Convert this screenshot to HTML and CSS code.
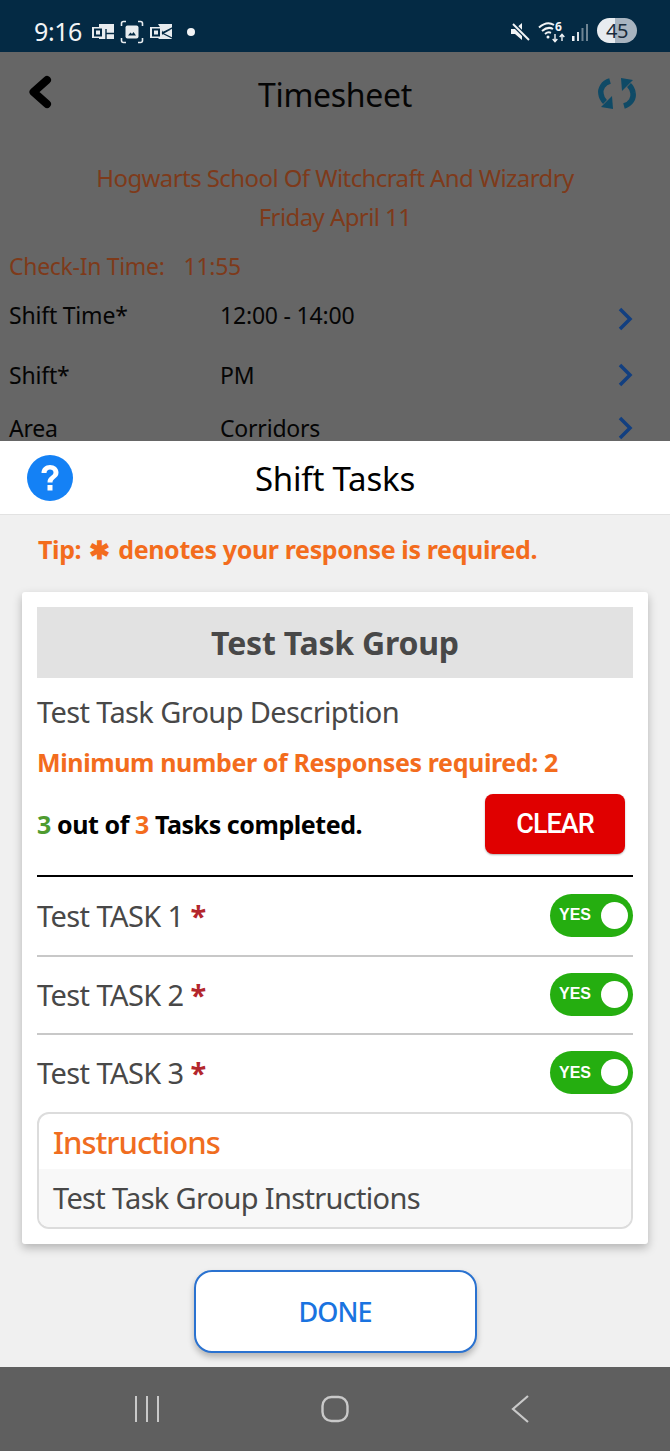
FILE: index.html
```html
<!DOCTYPE html>
<html lang="en">
<head>
    <meta charset="UTF-8">
    <meta name="viewport" content="width=device-width, initial-scale=1.0">
    <title>Timesheet</title>
    <link rel="stylesheet" href="styles.css">
</head>
<body>
    <div class="status-bar">
        <span class="clock">9:16</span>
        <svg class="note-icon" width="24" height="18" viewBox="0 0 24 18">
            <path d="M8 1h15v15H8z" fill="#e8ecef"/>
            <rect x="1" y="4" width="12" height="11" fill="#e8ecef"/>
            <rect x="4" y="6.500" width="6" height="6" fill="none" stroke="#042a44" stroke-width="2"/>
            <path d="M15 6v10M15 10.500h8" stroke="#042a44" stroke-width="1.400"/>
        </svg>
        <svg class="note-icon" width="24" height="24" viewBox="0 0 24 24" fill="none">
            <path d="M6 1.500H3.500Q1.500 1.500 1.500 3.500V6M18 1.500h2.500Q22.500 1.500 22.500 3.500V6M1.500 18v2.500Q1.500 22.500 3.500 22.500H6M22.500 18v2.500Q22.500 22.500 20.500 22.500H18" stroke="#e8ecef" stroke-width="1.600"/>
            <rect x="5.500" y="5.500" width="13" height="13" rx="2" fill="#e8ecef"/>
            <path d="M8 15.500l2.500-3 1.500 1.500 1.500-2 2.500 3.500z" fill="#042a44"/>
        </svg>
        <svg class="note-icon" width="24" height="18" viewBox="0 0 24 18">
            <rect x="1" y="4" width="12" height="11" fill="#e8ecef"/>
            <path d="M9 1h14v5l-9 3zM14 11l9-5v10H9z" fill="#e8ecef"/>
            <rect x="4" y="6.500" width="6" height="6" fill="none" stroke="#042a44" stroke-width="2"/>
            <path d="M13 10l11-5.500M13 10l11 5.500" stroke="#042a44" stroke-width="1.300"/>
        </svg>
        <span class="status-dot"></span>
        <span class="status-right">
            <svg class="mute" width="20" height="20" viewBox="0 0 20 20">
                <path d="M1 7h4l7-6v17l-7-6H1z" fill="#f2f4f6"/>
                <path d="M2 1l17 17" stroke="#042a44" stroke-width="4.500"/>
                <path d="M3 2l16 16" stroke="#f2f4f6" stroke-width="2"/>
            </svg>
            <svg class="wifi" width="27" height="26" viewBox="0 -4 27 26" fill="none" stroke="#f2f4f6">
                <path d="M1 6.500q8-7 15-2.500M4 10q6-5 11-2M7 13q3-2.500 6-1.200" stroke-width="2"/>
                <circle cx="10" cy="16" r="1.500" fill="#f2f4f6" stroke="none"/>
                <path d="M17 13v7M14.700 18l2.300 2.700 2.300-2.700M24 20v-6M21.700 16l2.300-2.700 2.300 2.700" stroke-width="1.400"/>
                <text x="17" y="10" class="wifi-six">6</text>
            </svg>
            <svg class="signal" width="18" height="20" viewBox="0 0 18 20">
                <rect x="1" y="14" width="2.500" height="5" fill="#f2f4f6"/>
                <rect x="6" y="10" width="2" height="9" fill="#dde2e6"/>
                <rect x="10.500" y="6" width="2" height="13" fill="#6f8493"/>
                <rect x="15" y="2" width="2" height="17" fill="#6f8493"/>
            </svg>
            <span class="battery">45</span>
        </span>
    </div>

    <div class="dimmed">
        <header class="top-bar">
            <svg class="back" width="26" height="34" viewBox="0 0 26 34" fill="none">
                <path d="M20 5L6.500 17 20 29" stroke="#000" stroke-width="8" stroke-linecap="round" stroke-linejoin="round"/>
            </svg>
            <h1>Timesheet</h1>
            <svg class="refresh" width="46" height="40" viewBox="7 5 46 40">
                <g>
                    <path d="M20 11C13 13 10 19 11 24c.5 4 2 6 4 8" fill="none" stroke="#0f4a66" stroke-width="5.500"/>
                    <path d="M11 37l12 2-1-13z" fill="#0f4a66"/>
                </g>
                <g transform="rotate(180 27 23.500)">
                    <path d="M20 11C13 13 10 19 11 24c.5 4 2 6 4 8" fill="none" stroke="#0f4a66" stroke-width="5.500"/>
                    <path d="M11 37l12 2-1-13z" fill="#0f4a66"/>
                </g>
            </svg>
        </header>
        <div class="school first">Hogwarts School Of Witchcraft And Wizardry</div>
        <div class="school">Friday April 11</div>
        <div class="check-in"><span>Check-In Time:</span><span>11:55</span></div>
        <div class="field-row row-time">
            <span class="field-name">Shift Time*</span><span class="field-value">12:00 - 14:00</span>
            <svg class="chev" width="16" height="24" viewBox="0 0 16 24" fill="none"><path d="M3 2l10 10L3 22" stroke="#123f80" stroke-width="3.500"/></svg>
        </div>
        <div class="field-row row-shift">
            <span class="field-name">Shift*</span><span class="field-value">PM</span>
            <svg class="chev" width="16" height="24" viewBox="0 0 16 24" fill="none"><path d="M3 2l10 10L3 22" stroke="#123f80" stroke-width="3.500"/></svg>
        </div>
        <div class="field-row row-area">
            <span class="field-name">Area</span><span class="field-value">Corridors</span>
            <svg class="chev" width="16" height="24" viewBox="0 0 16 24" fill="none"><path d="M3 2l10 10L3 22" stroke="#123f80" stroke-width="3.500"/></svg>
        </div>
    </div>

    <div class="sheet-head">
        <svg class="help" width="46" height="46" viewBox="0 0 46 46">
            <circle cx="23" cy="23" r="23" fill="#1481f5"/>
            <path d="M14.500 18c0-5 3.800-8 8.500-8s8.500 3 8.500 7.500c0 6-6 5.500-6 10h-5c0-6.500 6-6.500 6-10 0-1.800-1.500-3-3.500-3s-3.500 1.500-3.500 3.500z" fill="#fff"/>
            <rect x="20.500" y="30" width="5" height="5.500" fill="#fff"/>
        </svg>
        <h2>Shift Tasks</h2>
    </div>

    <main class="sheet-body">
        <p class="tip">Tip: <span class="tip-star">✱</span> denotes your response is required.</p>
        <section class="card">
            <h3 class="group-title">Test Task Group</h3>
            <p class="group-desc">Test Task Group Description</p>
            <p class="min-resp">Minimum number of Responses required: 2</p>
            <div class="progress-row">
                <p class="progress"><span class="green">3</span> out of <span class="orange">3</span> Tasks completed.</p>
                <button class="clear">CLEAR</button>
            </div>
            <div class="task first">
                <span class="task-name">Test TASK 1 <span class="req">*</span></span>
                <span class="toggle"><span>YES</span><i></i></span>
            </div>
            <div class="task">
                <span class="task-name">Test TASK 2 <span class="req">*</span></span>
                <span class="toggle"><span>YES</span><i></i></span>
            </div>
            <div class="task last">
                <span class="task-name">Test TASK 3 <span class="req">*</span></span>
                <span class="toggle"><span>YES</span><i></i></span>
            </div>
            <div class="instructions">
                <div class="instr-head">Instructions</div>
                <div class="instr-body">Test Task Group Instructions</div>
            </div>
        </section>
        <button class="done">DONE</button>
    </main>

    <nav class="nav-bar">
        <svg width="30" height="30" viewBox="0 0 30 30" fill="#c9c9c9">
            <rect x="3" y="2" width="2" height="26"/>
            <rect x="14" y="2" width="2" height="26"/>
            <rect x="25" y="2" width="2" height="26"/>
        </svg>
        <svg width="30" height="30" viewBox="0 0 30 30" fill="none">
            <rect x="2.500" y="3" width="25" height="24" rx="9" stroke="#c9c9c9" stroke-width="2.400"/>
        </svg>
        <svg width="30" height="30" viewBox="0 0 30 30" fill="none">
            <path d="M21 2L6 15l15 13" stroke="#c9c9c9" stroke-width="2.200"/>
        </svg>
    </nav>
</body>
</html>
```

FILE: styles.css
```css
* {
    box-sizing: border-box;
}
html, body {
    margin: 0;
    padding: 0;
}
body {
    width: 670px;
    height: 1451px;
    overflow: hidden;
    font-family: "Noto Sans", "Open Sans", sans-serif;
    background-color: #666;
}
h1, h2, h3, p {
    margin: 0;
    font-weight: normal;
}

/* status bar */
.status-bar {
    height: 52px;
    background-color: #042a44;
    display: flex;
    align-items: center;
    padding: 11px 33px 0 34px;
    color: #f2f4f6;
}
.clock {
    font-size: 25px;
    letter-spacing: -0.4px;
    margin-right: 9px;
    margin-bottom: 2px;
}
.note-icon {
    margin-right: 5px;
}
.status-dot {
    width: 8px;
    height: 8px;
    border-radius: 50%;
    background-color: #f2f4f6;
    margin-left: 9px;
}
.status-right {
    margin-left: auto;
    display: flex;
    align-items: center;
}
.wifi {
    margin-left: 8px;
    margin-top: -4px;
}
.signal {
    margin-left: 6px;
}
.wifi-six {
    font-size: 12px;
    font-weight: bold;
    fill: #f2f4f6;
    stroke: none;
    font-family: "Noto Sans", sans-serif;
}
.battery {
    width: 40px;
    height: 25px;
    margin-left: 8px;
    margin-top: -2px;
    border-radius: 13px;
    background: linear-gradient(90deg, #e8ecf0 45%, #a8b4c0 45%);
    color: #1a2c3c;
    font-size: 20px;
    letter-spacing: -0.5px;
    line-height: 25px;
    text-align: center;
}

/* dimmed timesheet behind the sheet */
.dimmed {
    height: 389px;
    background-color: #666;
    padding-left: 9px;
    color: #000;
}
.top-bar {
    height: 85px;
    margin-left: -9px;
    display: grid;
    grid-template-columns: 1fr auto 1fr;
    align-items: center;
    padding: 0 27px;
}
.back {
    margin-bottom: 6px;
}
.refresh {
    justify-self: end;
}
.top-bar h1 {
    font-size: 32px;
    letter-spacing: -0.33px;
    color: #050505;
}
.school {
    color: #7e3a1a;
    font-size: 24px;
    letter-spacing: -0.58px;
    line-height: 39px;
    text-align: center;
    margin-left: -9px;
}
.school.first {
    margin-top: 21px;
}
.check-in {
    color: #7e3a1a;
    font-size: 23px;
    letter-spacing: -0.3px;
    line-height: 32px;
    margin-top: 14px;
    display: flex;
    gap: 19px;
}
.field-row {
    display: flex;
    align-items: center;
    padding-right: 37px;
    font-size: 23px;
    line-height: 24px;
    letter-spacing: -0.2px;
    color: #050505;
}
.row-time {
    height: 66px;
}
.row-shift {
    height: 54px;
}
.row-area {
    height: 39px;
    padding-top: 14px;
    padding-bottom: 1px;
}
.field-name {
    width: 211px;
}
.chev {
    margin-left: auto;
}
.row-time .chev {
    margin-top: 8px;
}

/* sheet */
.sheet-head {
    height: 74px;
    padding-top: 2px;
    background-color: #fff;
    border-bottom: 1px solid #e2e2e2;
    display: flex;
    align-items: center;
    justify-content: center;
    position: relative;
}
.sheet-head h2 {
    font-size: 33px;
    letter-spacing: -0.2px;
    color: #000;
}
.help {
    position: absolute;
    left: 27px;
    top: 14px;
}
.sheet-body {
    height: 852px;
    background-color: #f0f0f0;
    padding: 17px 22px 0;
}
.tip {
    color: #f36c1d;
    font-size: 25px;
    font-weight: bold;
    letter-spacing: -0.36px;
    line-height: 34px;
    padding-left: 16px;
    height: 34px;
    margin-bottom: 26px;
}
.tip-star {
    font-size: 25px;
    line-height: 20px;
    margin: 0 2px;
}
.card {
    width: 626px;
    height: 652px;
    background-color: #fff;
    border-radius: 3px;
    box-shadow: 0 4px 10px rgba(0,0,0,0.25);
    padding: 15px;
}
.group-title {
    height: 71px;
    line-height: 71px;
    background-color: #e2e2e2;
    text-align: center;
    font-size: 32px;
    font-weight: bold;
    letter-spacing: -0.2px;
    color: #484848;
}
.group-desc {
    font-size: 29px;
    letter-spacing: -0.62px;
    line-height: 40px;
    margin-top: 14px;
    color: #484848;
}
.min-resp {
    font-size: 25px;
    font-weight: bold;
    letter-spacing: -0.38px;
    line-height: 34px;
    margin-top: 13px;
    color: #f36c1d;
}
.progress-row {
    height: 96px;
    display: flex;
    align-items: center;
    justify-content: space-between;
    padding: 15px 8px 21px 0;
}
.progress {
    font-size: 25px;
    font-weight: bold;
    letter-spacing: -0.43px;
    color: #000;
}
.green {
    color: #4f9b2f;
}
.orange {
    color: #f36c1d;
}
.clear {
    width: 140px;
    height: 60px;
    border: none;
    border-radius: 8px;
    background-color: #e00000;
    color: #fff;
    font-family: Roboto, sans-serif;
    font-size: 27px;
    font-weight: 500;
    letter-spacing: -1px;
    box-shadow: 0 1px 2px rgba(0,0,0,0.3);
}
.task {
    height: 78px;
    padding-bottom: 2px;
    display: flex;
    align-items: center;
    justify-content: space-between;
    border-bottom: 2px solid #c8c8c8;
}
.task.first {
    height: 82px;
    border-top: 2px solid #000;
}
.task.last {
    height: 77px;
    border-bottom: none;
}
.task-name {
    font-size: 29px;
    letter-spacing: -0.58px;
    color: #484848;
}
.req {
    color: #b3262c;
    font-weight: bold;
}
.toggle {
    width: 83px;
    height: 43px;
    border-radius: 22px;
    background-color: #25ae10;
    display: flex;
    align-items: center;
    justify-content: space-between;
    padding: 0 3px 0 9px;
    color: #fff;
    font-family: "Liberation Sans", sans-serif;
    font-size: 16px;
    font-weight: bold;
}
.toggle i {
    width: 27px;
    height: 27px;
    margin-right: 2px;
    border-radius: 50%;
    background-color: #fff;
}
.instructions {
    border: 2px solid #dcdcdc;
    border-radius: 12px;
    height: 117px;
    overflow: hidden;
}
.instr-head {
    height: 55px;
    line-height: 56px;
    padding-left: 14px;
    font-size: 31px;
    font-weight: 500;
    letter-spacing: -1px;
    color: #f06d1f;
}
.instr-body {
    height: 58px;
    line-height: 58px;
    padding-left: 14px;
    font-size: 29px;
    letter-spacing: -0.68px;
    background-color: #f8f8f8;
    color: #484848;
}
.done {
    display: block;
    width: 283px;
    height: 83px;
    margin: 26px auto 0;
    border: 2px solid #2a72d0;
    border-radius: 18px;
    background-color: #fff;
    color: #1a73e0;
    font-family: "Noto Sans", sans-serif;
    font-size: 27px;
    font-weight: 500;
    letter-spacing: -1px;
    box-shadow: 0 4px 6px rgba(0,0,0,0.25);
}

/* nav bar */
.nav-bar {
    height: 84px;
    background-color: #5f5f5f;
    display: flex;
    align-items: center;
    padding: 0 133px 0 132px;
    justify-content: space-between;
}
```
